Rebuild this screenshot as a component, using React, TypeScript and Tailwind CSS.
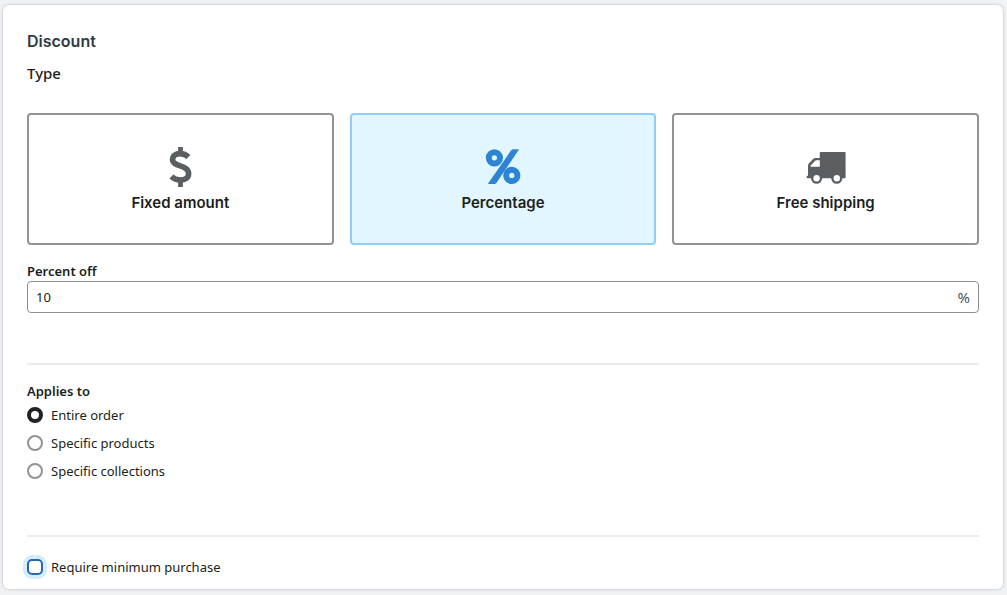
import { useState } from "react";
import type { ReactNode } from "react";
import clsx from "clsx";

type DiscountType = "fixed" | "percentage" | "shipping";

const DollarIcon = () => (
  <svg viewBox="0 0 40 40" className="size-10" fill="none" stroke="currentColor" aria-hidden="true">
    <path d="M20.5 0v5M20.5 34v6" strokeWidth="4.8" />
    <path
      d="M28.4 10C26.2 7.7 23.4 6.6 20 6.6C15.6 6.6 12.6 9 12.6 12.6C12.6 20.4 28.6 17.4 28.6 26.4C28.6 30.6 25.4 33 20.4 33C16.6 33 13.6 31.8 11.4 29.6"
      strokeWidth="5.6"
    />
  </svg>
);

const PercentIcon = () => (
  <svg viewBox="0 0 40 40" className="size-10" fill="none" stroke="currentColor" aria-hidden="true">
    <circle cx="11.4" cy="10.8" r="5.6" strokeWidth="6" />
    <circle cx="28.8" cy="28.4" r="5.6" strokeWidth="6" />
    <path d="M30 2.3h5.4q.6 0 .3.6L13.2 36.2q-.6.8-1.6.8H5.4q-.6 0-.3-.6L28.200 3.200q.6-.9 1.800-.9z" fill="currentColor" stroke="none" />
  </svg>
);

const TruckIcon = () => (
  <svg viewBox="0 0 40 40" className="size-10" fill="currentColor" aria-hidden="true">
    <path
      fillRule="evenodd"
      d="M14.6 5H38.8Q39.6 5 39.6 5.8V30.4Q39.6 31.2 38.8 31.2H1.6Q.6 31.2.6 30.2V29.4L2 28.6V18.4Q2 17.200 2.800 16.400L7.400 11.800Q8.200 11 9.400 11H13.800V5.800Q13.800 5 14.600 5zM9.800 13.200L4.600 18.400V19.800H13.800V13.200z"
    />
    <circle cx="10.6" cy="31.2" r="4.4" fill="white" stroke="currentColor" strokeWidth="2.4" />
    <circle cx="30.800" cy="31.2" r="4.4" fill="white" stroke="currentColor" strokeWidth="2.4" />
  </svg>
);

const discountTypes: { id: DiscountType; label: string; icon: ReactNode }[] = [
  { id: "fixed", label: "Fixed amount", icon: <DollarIcon /> },
  { id: "percentage", label: "Percentage", icon: <PercentIcon /> },
  { id: "shipping", label: "Free shipping", icon: <TruckIcon /> },
];

const targets = ["Entire order", "Specific products", "Specific collections"];

export default function App() {
  const [type, setType] = useState<DiscountType>("percentage");
  const [percent, setPercent] = useState("10");
  const [target, setTarget] = useState(targets[0]);
  const [requireMinimum, setRequireMinimum] = useState(false);

  return (
    <div className="min-h-screen bg-[#f1f2f4] pt-[5px] pr-1 pb-1 pl-[3px] font-['Noto_Sans',sans-serif] text-[#1c1e20]">
      <form className="rounded-md bg-white px-6 pt-6 pb-2 shadow-[0_0_3px_rgba(60,70,90,0.35)]">
        <h2 className="font-[Inter,sans-serif] text-base leading-6 font-semibold text-[#303a42]">Discount</h2>
        <h3 className="mt-2 text-[15px] leading-6 font-medium">Type</h3>

        {/* Discount type */}
        <div className="mt-7 grid grid-cols-3 gap-4">
          {discountTypes.map(({ id, label, icon }) => {
            const selected = id === type;
            return (
              <button
                key={id}
                type="button"
                aria-pressed={selected}
                onClick={() => setType(id)}
                className={clsx(
                  "flex h-33 flex-col items-center gap-1 rounded-sm border-2 pt-8",
                  selected ? "border-[#90cff5] bg-[#e1f6fe]" : "border-[#939393] bg-white",
                )}
              >
                <span className={selected ? "text-[#2c84d2]" : "text-[#5c5f62]"}>{icon}</span>
                <span className="font-[Inter,sans-serif] text-[15px] leading-6 font-semibold">{label}</span>
              </button>
            );
          })}
        </div>

        {/* Amount */}
        <label htmlFor="percent-off" className="mt-4 block text-[13px] leading-5 font-semibold">
          Percent off
        </label>
        <div className="flex h-8 items-center rounded-sm border border-[#8c8f92] px-2">
          <input
            id="percent-off"
            value={percent}
            onChange={(e) => setPercent(e.target.value)}
            className="min-w-0 flex-1 bg-transparent text-[13px] leading-5 outline-none"
          />
          <span className="text-[15px] leading-5 text-[#4a5560]">%</span>
        </div>

        <hr className="mt-[50px] border-t-2 border-[#e8ecec]" />

        {/* Applies to */}
        <fieldset className="mt-4">
          <legend className="text-[13px] leading-5 font-semibold">Applies to</legend>
          {targets.map((name) => (
            <label key={name} className="flex h-7 items-center gap-2 text-[13px] leading-5">
              <input
                type="radio"
                name="target"
                checked={target === name}
                onChange={() => setTarget(name)}
                className="size-4 appearance-none rounded-full border-2 border-[#939393] checked:border-4 checked:border-[#1f2124]"
              />
              {name}
            </label>
          ))}
        </fieldset>

        <hr className="mt-[50px] border-t-2 border-[#e8ecec]" />

        {/* Minimum */}
        <label className="mt-4 flex h-7 items-center gap-2 text-[13px] leading-5">
          <input
            type="checkbox"
            checked={requireMinimum}
            onChange={(e) => setRequireMinimum(e.target.checked)}
            className="size-4 appearance-none rounded-[5px] border-2 border-[#2467b0] ring-4 ring-[#d5edfb] checked:bg-[#2467b0]"
          />
          Require minimum purchase
        </label>
      </form>
    </div>
  );
}
